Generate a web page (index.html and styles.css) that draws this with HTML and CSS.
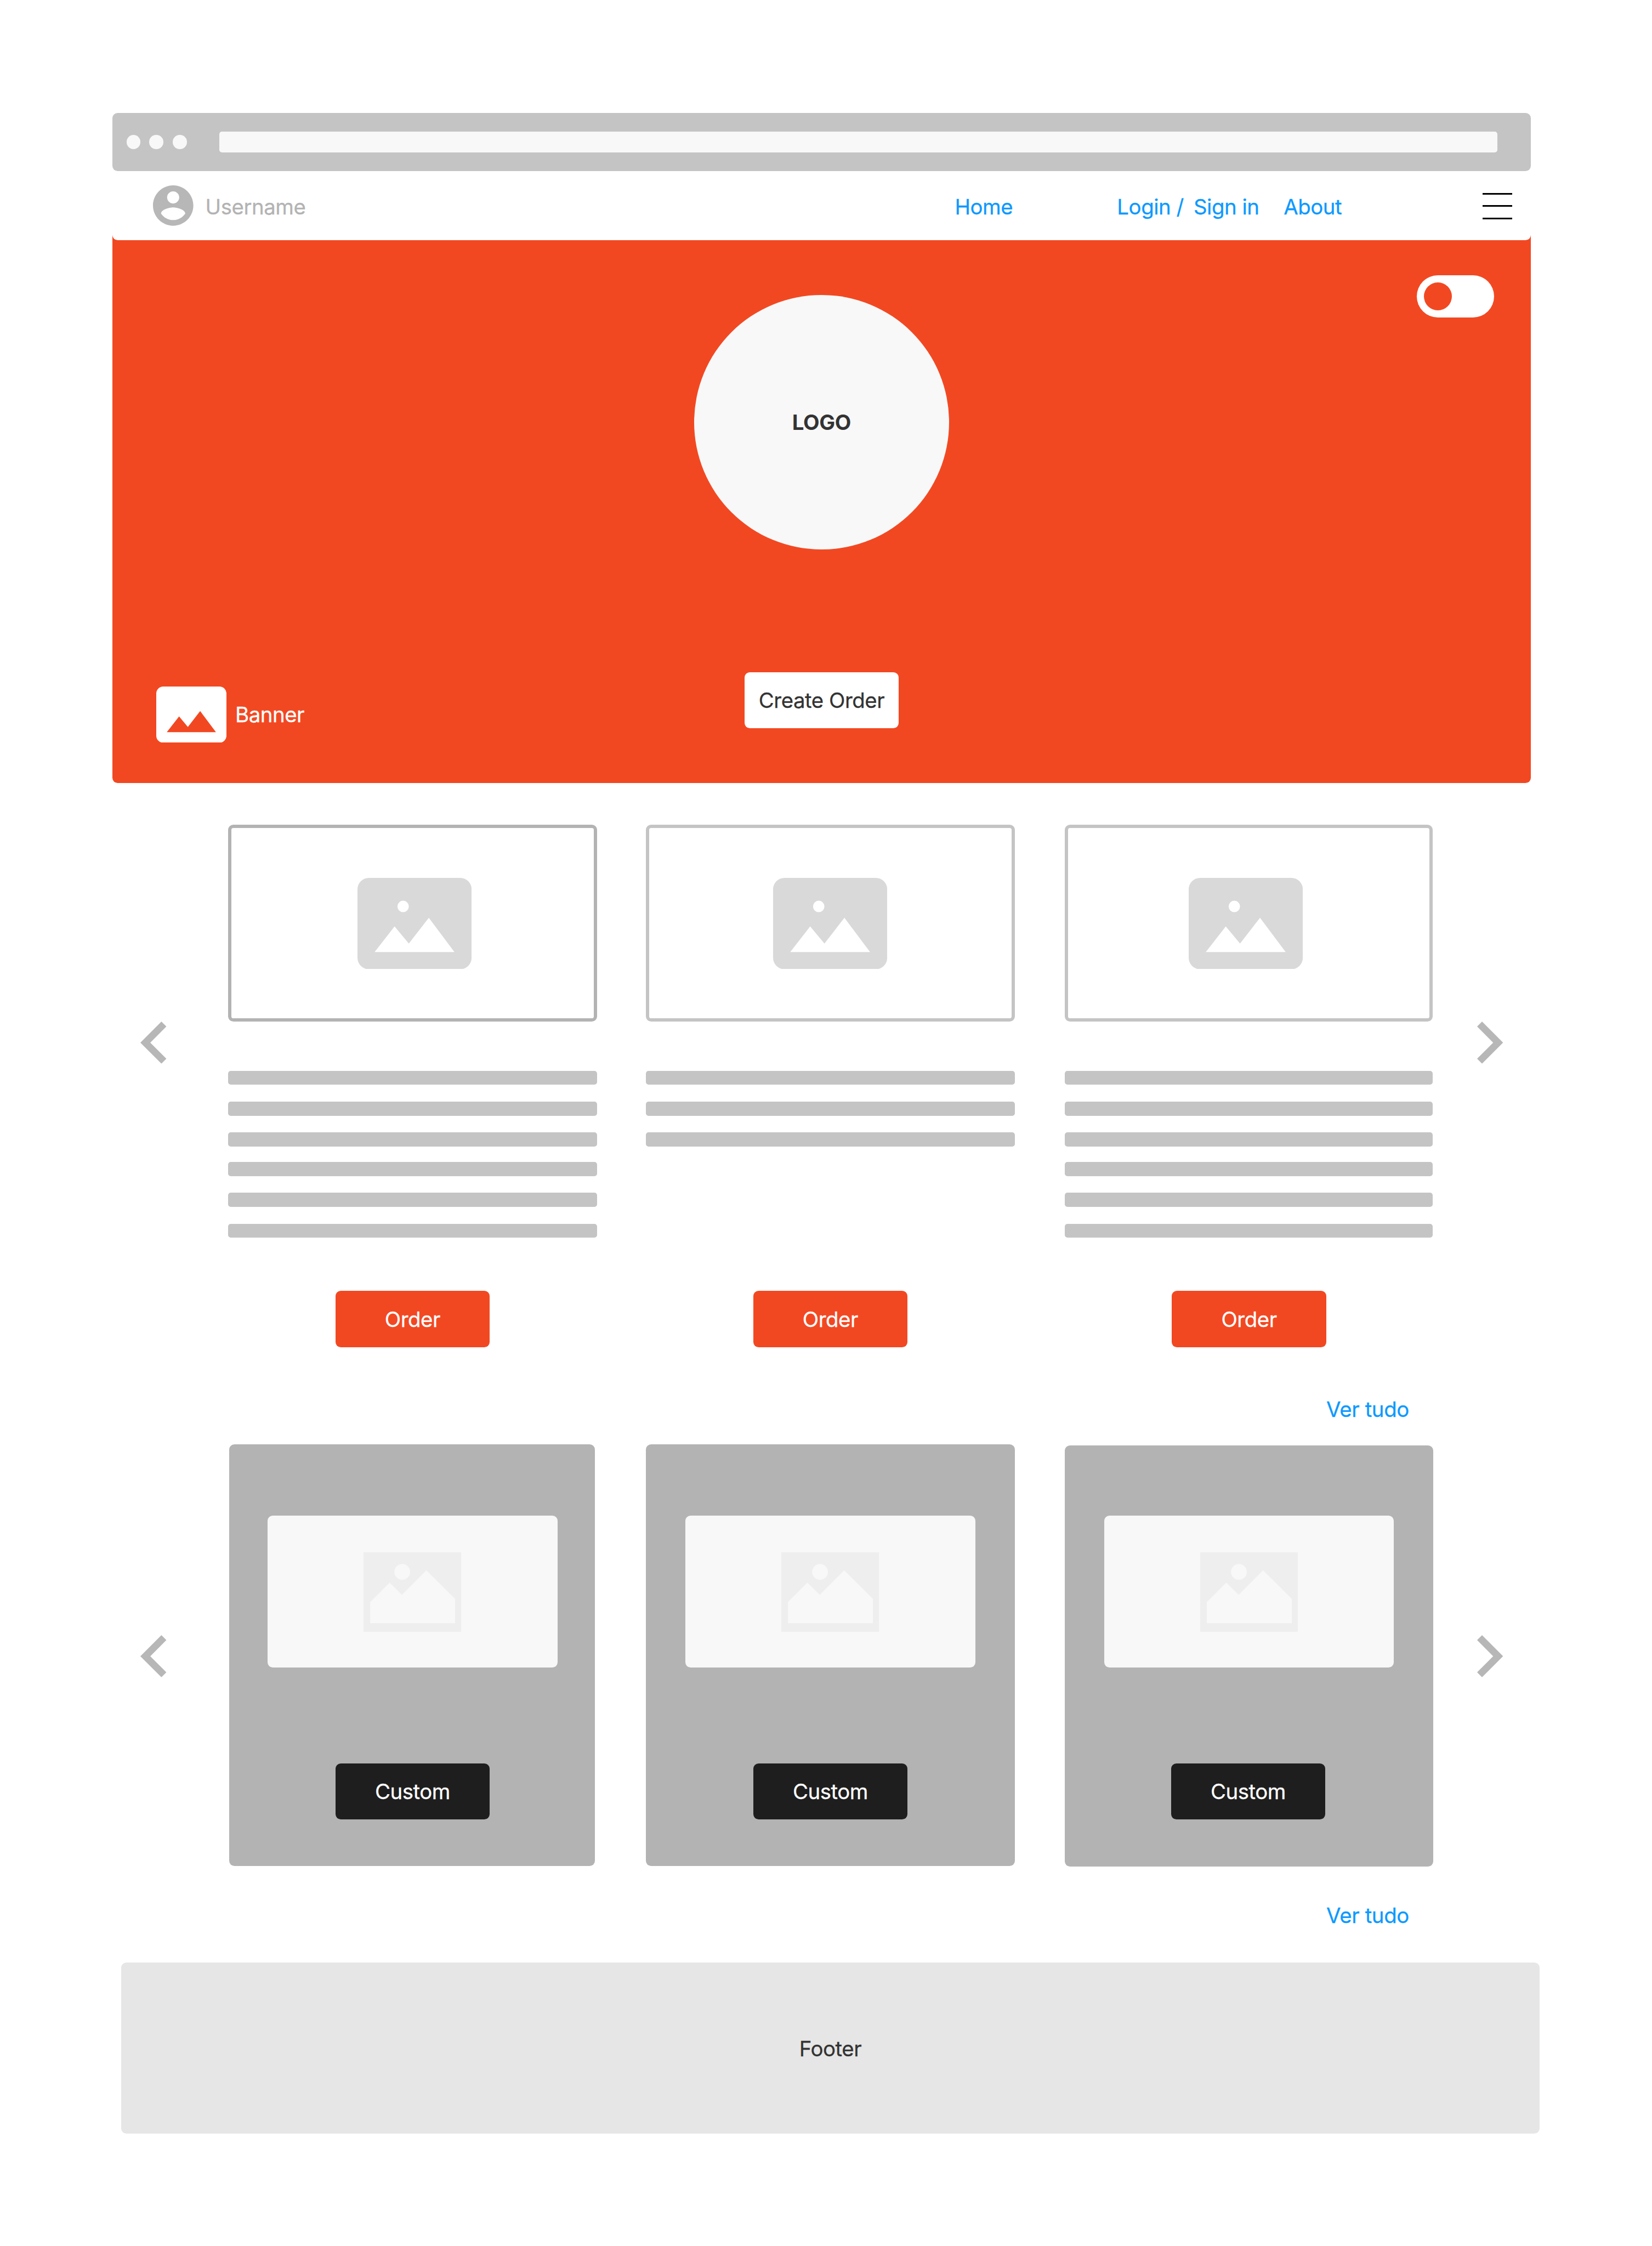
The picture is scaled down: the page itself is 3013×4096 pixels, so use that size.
FILE: index.html
```html
<!DOCTYPE html>
<html lang="pt">
<head>
<meta charset="utf-8">
<title>Home</title>
<link rel="stylesheet" href="styles.css">
</head>
<body>
<svg class="sprite" aria-hidden="true">
  <symbol id="picture" viewBox="0 0 40 32">
    <path fill-rule="evenodd" d="M4 0H36A4 4 0 0 1 40 4V28A4 4 0 0 1 36 32H4A4 4 0 0 1 0 28V4A4 4 0 0 1 4 0ZM6 26H34L25 14L18 23L13 17ZM16 8A2 2 0 1 0 16 12A2 2 0 1 0 16 8Z"/>
  </symbol>
  <symbol id="picture-square" viewBox="0 0 223 181">
    <path class="frame" d="M0 0H223V181H0Z"/>
    <circle class="shape" cx="88.2" cy="44.6" r="17.9"/>
    <path class="shape" d="M15.2 113.3L59.4 68.9L87.5 96.8L143.2 40.9L208.6 106V161.5H15.2Z"/>
  </symbol>
  <symbol id="chevron-left" viewBox="8 6 7.41 12">
    <path d="M15.41 7.41L14 6l-6 6 6 6 1.41-1.41L10.83 12z"/>
  </symbol>
  <symbol id="chevron-right" viewBox="8.59 6 7.41 12">
    <path d="M8.59 16.59L13.17 12 8.59 7.41 10 6l6 6-6 6z"/>
  </symbol>
</svg>

<header class="browser-bar">
  <span class="dot"></span><span class="dot"></span><span class="dot"></span>
  <span class="address"></span>
</header>

<div class="top">
  <nav class="nav">
    <svg class="avatar" viewBox="2 2 20 20"><path d="M12 2C6.48 2 2 6.48 2 12s4.48 10 10 10 10-4.48 10-10S17.52 2 12 2zm0 3c1.66 0 3 1.34 3 3s-1.34 3-3 3-3-1.34-3-3 1.34-3 3-3zm0 14.2c-2.5 0-4.71-1.28-6-3.22.03-1.99 4-3.08 6-3.08 1.99 0 5.97 1.09 6 3.08-1.29 1.94-3.5 3.22-6 3.22z"/></svg>
    <span class="username">Username</span>
    <a class="link">Home</a>
    <a class="link">Login /</a>
    <a class="link">Sign in</a>
    <a class="link">About</a>
    <span class="menu"><i></i><i></i><i></i></span>
  </nav>

  <section class="hero">
    <span class="toggle"><span class="knob"></span></span>
    <div class="logo">LOGO</div>
    <div class="hero-row">
      <div class="banner">
        <svg class="banner-icon" viewBox="0 0 40 32"><path fill-rule="evenodd" d="M4 0H36A4 4 0 0 1 40 4V28A4 4 0 0 1 36 32H4A4 4 0 0 1 0 28V4A4 4 0 0 1 4 0ZM6 26H34L25 14L18 23L13 17Z"/></svg>
        <span>Banner</span>
      </div>
      <a class="button create">Create Order</a>
    </div>
  </section>
</div>

<section class="carousel products">
  <svg class="arrow"><use href="#chevron-left"/></svg>
  <div class="cards">
    <article class="product first">
      <div class="thumb"><svg><use href="#picture"/></svg></div>
      <div class="lines"><i></i><i></i><i></i><i></i><i></i><i></i></div>
      <a class="button order">Order</a>
    </article>
    <article class="product">
      <div class="thumb"><svg><use href="#picture"/></svg></div>
      <div class="lines"><i></i><i></i><i></i></div>
      <a class="button order">Order</a>
    </article>
    <article class="product last">
      <div class="thumb"><svg><use href="#picture"/></svg></div>
      <div class="lines"><i></i><i></i><i></i><i></i><i></i><i></i></div>
      <a class="button order">Order</a>
    </article>
  </div>
  <svg class="arrow"><use href="#chevron-right"/></svg>
</section>
<a class="see-all">Ver tudo</a>

<section class="carousel customs">
  <svg class="arrow"><use href="#chevron-left"/></svg>
  <div class="cards">
    <article class="custom first">
      <div class="panel"><svg><use href="#picture-square"/></svg></div>
      <a class="button dark">Custom</a>
    </article>
    <article class="custom">
      <div class="panel"><svg><use href="#picture-square"/></svg></div>
      <a class="button dark">Custom</a>
    </article>
    <article class="custom last">
      <div class="panel"><svg><use href="#picture-square"/></svg></div>
      <a class="button dark">Custom</a>
    </article>
  </div>
  <svg class="arrow"><use href="#chevron-right"/></svg>
</section>
<a class="see-all">Ver tudo</a>

<footer class="footer">Footer</footer>
</body>
</html>
```
FILE: styles.css
```css
:root {
  --u: 3.2019px; /* one layout unit */
  --orange: #f24822;
  --blue: #0d99ff;
  --gray: #b3b3b3;
  --gray-light: #c4c4c4;
  --paper: #f8f8f8;
}

* { box-sizing: border-box; }

html { background: #fff; }

body {
  margin: 0;
  width: calc(941 * var(--u));
  height: 4096px;
  overflow: hidden;
  padding: calc(64.375 * var(--u)) 0 0 calc(64 * var(--u));
  font-family: Inter, "Liberation Sans", sans-serif;
  font-optical-sizing: none;
  font-weight: 400;
  -webkit-text-stroke: 0.3px currentColor;
  letter-spacing: -0.0125em;
  font-size: calc(12 * var(--u));
  line-height: calc(15 * var(--u));
  color: #333;
}

.sprite { display: none; }
svg { display: block; flex: none; }

/* browser chrome */
.browser-bar {
  display: flex;
  align-items: center;
  width: calc(808 * var(--u));
  height: calc(33 * var(--u));
  padding-left: calc(8 * var(--u));
  border-radius: calc(3 * var(--u));
  background: var(--gray-light);
}
.dot {
  width: calc(8 * var(--u));
  height: calc(8 * var(--u));
  margin-right: calc(5 * var(--u));
  border-radius: 50%;
  background: var(--paper);
}
.dot:nth-child(2) { margin-right: calc(5.5 * var(--u)); }
.dot:nth-child(3) { margin-right: calc(18.5 * var(--u)); }
.address {
  width: calc(728 * var(--u));
  height: calc(12 * var(--u));
  border-radius: calc(1.5 * var(--u));
  background: var(--paper);
}

/* navigation; the hero colour shows behind its rounded lower corners */
.top {
  width: calc(808 * var(--u));
  border-radius: 0 0 calc(3 * var(--u)) calc(3 * var(--u));
  background: linear-gradient(#fff calc(36 * var(--u)), var(--orange) calc(36 * var(--u)));
}
.nav {
  display: grid;
  grid-template-columns: 29.75fr 426.9fr 92.4fr 43.6fr 51.3fr 113.3fr 17fr;
  align-items: center;
  width: 100%;
  height: calc(39.5 * var(--u));
  padding: 0 calc(10.5 * var(--u)) 0 calc(23.25 * var(--u));
  border-radius: 0 0 calc(3 * var(--u)) calc(3 * var(--u));
  background: #fff;
}
.nav > * { min-width: 0; white-space: nowrap; }
.avatar {
  width: calc(23 * var(--u));
  height: calc(23 * var(--u));
  fill: #b7b7b7;
}
.username { color: var(--gray); padding-top: var(--u); }
.link { color: var(--blue); padding-top: var(--u); }
.menu {
  display: grid;
  gap: calc(6 * var(--u));
  padding-top: calc(0.5 * var(--u));
}
.menu i { height: var(--u); background: #000; }

/* hero */
.hero {
  display: flex;
  flex-direction: column;
  align-items: center;
  height: calc(309 * var(--u));
  padding: calc(20 * var(--u)) 0 0;
}
.toggle {
  align-self: flex-end;
  display: flex;
  align-items: center;
  width: calc(44 * var(--u));
  height: calc(24 * var(--u));
  margin-right: calc(21 * var(--u));
  padding-left: calc(4 * var(--u));
  border-radius: calc(12 * var(--u));
  background: #fff;
}
.knob {
  width: calc(16 * var(--u));
  height: calc(16 * var(--u));
  border-radius: 50%;
  background: var(--orange);
}
.logo {
  display: grid;
  place-items: center;
  flex: none;
  width: calc(145 * var(--u));
  height: calc(145 * var(--u));
  margin-top: calc(-13 * var(--u));
  border-radius: 50%;
  background: var(--paper);
  font-weight: 700;
  -webkit-text-stroke: 0;
  letter-spacing: -0.008em;
}
.hero-row {
  display: grid;
  grid-template-columns: 1fr auto 1fr;
  width: 100%;
  margin-top: calc(70 * var(--u));
  padding: 0 calc(25 * var(--u));
}
.banner {
  display: flex;
  align-items: center;
  gap: calc(5 * var(--u));
  margin-top: calc(8 * var(--u));
  color: #fff;
}
.banner-icon {
  width: calc(40 * var(--u));
  height: calc(32 * var(--u));
  fill: #fff;
}

.button {
  display: grid;
  place-items: center;
  flex: none;
  width: calc(88 * var(--u));
  height: calc(32 * var(--u));
  border-radius: calc(3 * var(--u));
  white-space: nowrap;
}
.create { background: #fff; }
.order { background: var(--orange); color: #fff; }
.dark { background: #1e1e1e; color: #fff; }

/* carousels */
.carousel {
  display: flex;
  align-items: center;
  padding-left: calc(16 * var(--u));
}
.arrow {
  width: calc(14.82 * var(--u));
  height: calc(24 * var(--u));
  fill: #b7b7b7;
}
.cards {
  display: grid;
  grid-template-columns: repeat(3, calc(210 * var(--u)));
  column-gap: calc(28 * var(--u));
  margin: 0 calc(25.3 * var(--u)) 0 calc(35.18 * var(--u));
}

.products { margin-top: calc(24 * var(--u)); }
.products .arrow { align-self: flex-start; margin-top: calc(111.9 * var(--u)); }
.product {
  display: flex;
  flex-direction: column;
  align-items: center;
  height: calc(297.45 * var(--u));
}
.product.last { margin-left: calc(0.5 * var(--u)); }
.thumb {
  display: grid;
  place-items: center;
  width: 100%;
  height: calc(112 * var(--u));
  border: calc(2 * var(--u)) solid var(--gray-light);
  border-radius: calc(3 * var(--u));
}
.thumb svg {
  width: calc(65 * var(--u));
  height: calc(52 * var(--u));
  fill: #d9d9d9;
}
.first .thumb { border-color: var(--gray); padding-left: calc(2 * var(--u)); }
.last .thumb { padding-right: calc(3.5 * var(--u)); }
.lines {
  display: grid;
  gap: calc(9.55 * var(--u));
  width: 100%;
  margin-top: calc(28 * var(--u));
}
.lines i {
  height: calc(8 * var(--u));
  border-radius: calc(1.5 * var(--u));
  background: var(--gray-light);
}
.lines i:nth-child(n + 4) { position: relative; top: calc(-0.65 * var(--u)); }
.order { margin-top: auto; }
.last .order { margin-left: calc(0.5 * var(--u)); }

.see-all {
  display: block;
  margin-left: calc(691.5 * var(--u));
  color: var(--blue);
  letter-spacing: -0.01em;
}
.products + .see-all { margin-top: calc(27.85 * var(--u)); }

.customs {
  height: calc(240.5 * var(--u));
  margin-top: calc(12.55 * var(--u));
}
.customs .arrow { margin-top: calc(1 * var(--u)); }
.custom {
  display: flex;
  flex-direction: column;
  align-items: center;
  height: calc(240 * var(--u));
  padding-top: calc(40.625 * var(--u));
  border-radius: calc(3 * var(--u));
  background: var(--gray);
}
.custom.first {
  margin: 0 calc(1 * var(--u)) 0 calc(0.5 * var(--u));
  padding-left: calc(0.5 * var(--u));
}
.custom.last {
  margin: calc(0.5 * var(--u)) calc(-0.5 * var(--u)) 0 calc(0.5 * var(--u));
  padding-top: calc(40.125 * var(--u));
}
.panel {
  display: grid;
  place-items: center;
  width: calc(165 * var(--u));
  height: calc(86.5 * var(--u));
  margin-bottom: calc(54.5 * var(--u));
  padding-top: calc(0.5 * var(--u));
  border-radius: calc(3 * var(--u));
  background: var(--paper);
}
.panel svg { width: calc(55.75 * var(--u)); height: calc(45.25 * var(--u)); }
.frame { fill: #eee; }
.shape { fill: var(--paper); }
.last .dark { margin-right: calc(1 * var(--u)); }
.customs + .see-all { margin-top: calc(20.35 * var(--u)); }

.footer {
  display: grid;
  place-items: center;
  width: calc(808 * var(--u));
  height: calc(97.5 * var(--u));
  margin: calc(19.2 * var(--u)) 0 0 calc(5 * var(--u));
  padding-top: calc(0.5 * var(--u));
  border-radius: calc(3 * var(--u));
  background: #e6e6e6;
}
```
